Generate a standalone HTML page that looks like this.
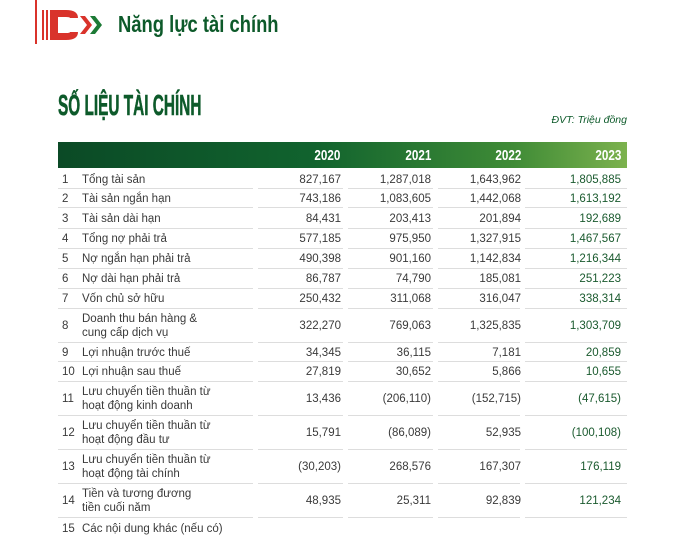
<!DOCTYPE html>
<html><head><meta charset="utf-8"><style>
*{margin:0;padding:0;box-sizing:border-box}
body{width:680px;height:540px;background:#fff;position:relative;overflow:hidden;font-family:"Liberation Sans",sans-serif;color:#333}
.ab{position:absolute}
.t1{left:118px;top:11px;font-size:23px;font-weight:bold;color:#0d5a2a;transform:scaleX(.8);transform-origin:left top;white-space:nowrap}
.t2{left:58px;top:90px;font-size:29px;font-weight:bold;color:#0d5a2a;transform:scaleX(.53);transform-origin:left top;white-space:nowrap;-webkit-text-stroke:.6px #0d5a2a}
.dvt{right:53px;top:114px;font-size:10.5px;font-style:italic;color:#0d5a2a}
.hd{left:58px;top:142px;width:569px;height:26px;background:linear-gradient(90deg,#0b4a26 0%,#11632e 45%,#3f8b36 80%,#7cb24e 100%)}
.hd div{position:absolute;top:5px;color:#fff;font-weight:bold;font-size:15px;transform:scaleX(.78);transform-origin:right top}
.row{position:absolute;left:58px;width:569px;font-size:11.5px;color:#3a3a3a}
.row .n{position:absolute;left:4px}
.row .l{position:absolute;left:24px;line-height:14px}
.row .v{position:absolute;text-align:right}
.bd{position:absolute;bottom:0;height:1px;background:#ddd}
</style></head><body>
<div class="ab" style="left:35px;top:0;width:2px;height:44px;background:#d9332b"></div>
<svg class="ab" style="left:40px;top:8px" width="68" height="34" viewBox="0 0 68 34">
<rect x="2" y="2" width="2" height="30" fill="#d9332b"/><rect x="6" y="2" width="2" height="30" fill="#d9332b"/>
<path d="M10 2 H26 Q38 2 38 10 H30 Q30 9 26 9 H18 V25 H26 Q30 25 30 24 H38 Q38 32 26 32 H10 Z" fill="#d9332b"/>
<path d="M40 8 L47 17 L40 26 H45 L52 17 L45 8 Z" fill="#d9332b"/>
<path d="M50 8 L57 17 L50 26 H55 L62 17 L55 8 Z" fill="#1c7a35"/>
</svg>
<div class="ab t1">Năng lực tài chính</div>
<div class="ab t2">SỐ LIỆU TÀI CHÍNH</div>
<div class="ab dvt">ĐVT: Triệu đồng</div>
<div class="ab hd">
<div style="right:287px">2020</div><div style="right:196px">2021</div><div style="right:106px">2022</div><div style="right:6px">2023</div>
</div>
<div id="rows"></div>
<script>
var R=[
[1,"Tổng tài sản","827,167","1,287,018","1,643,962","1,805,885",170,19],
[2,"Tài sản ngắn hạn","743,186","1,083,605","1,442,068","1,613,192",189,19],
[3,"Tài sản dài hạn","84,431","203,413","201,894","192,689",208,21],
[4,"Tổng nợ phải trả","577,185","975,950","1,327,915","1,467,567",229,20],
[5,"Nợ ngắn hạn phải trả","490,398","901,160","1,142,834","1,216,344",249,20],
[6,"Nợ dài hạn phải trả","86,787","74,790","185,081","251,223",269,20],
[7,"Vốn chủ sở hữu","250,432","311,068","316,047","338,314",289,20],
[8,"Doanh thu bán hàng &amp;<br>cung cấp dịch vụ","322,270","769,063","1,325,835","1,303,709",309,34],
[9,"Lợi nhuận trước thuế","34,345","36,115","7,181","20,859",343,19],
[10,"Lợi nhuận sau thuế","27,819","30,652","5,866","10,655",362,20],
[11,"Lưu chuyển tiền thuần từ<br>hoạt động kinh doanh","13,436","(206,110)","(152,715)","(47,615)",382,34],
[12,"Lưu chuyển tiền thuần từ<br>hoạt động đầu tư","15,791","(86,089)","52,935","(100,108)",416,34],
[13,"Lưu chuyển tiền thuần từ<br>hoạt động tài chính","(30,203)","268,576","167,307","176,119",450,34],
[14,"Tiền và tương đương<br>tiền cuối năm","48,935","25,311","92,839","121,234",484,34],
[15,"Các nội dung khác (nếu có)","","","","",518,22]];
var rights=[286,196,106,6],cols=[[0,195],[200,285],[290,375],[380,462],[467,569]],h="";
R.forEach(function(r){
var y=r[6],hh=r[7],two=hh>30,ty=two?(hh-28)/2:(hh-14)/2;
h+='<div class="row" style="top:'+y+'px;height:'+hh+'px">';
h+='<div class="n" style="top:'+((hh-14)/2)+'px;line-height:14px">'+r[0]+'</div>';
h+='<div class="l" style="top:'+ty+'px">'+r[1]+'</div>';
for(var i=0;i<4;i++)h+='<div class="v" style="right:'+rights[i]+'px;top:'+((hh-14)/2)+'px;line-height:14px;'+(i==3?'color:#1a5a2e':'')+'">'+r[2+i]+'</div>';
if(r[0]<15)cols.forEach(function(c){h+='<div class="bd" style="left:'+c[0]+'px;width:'+(c[1]-c[0])+'px"></div>'});
h+='</div>';});
document.getElementById('rows').innerHTML=h;
</script>
</body></html>
